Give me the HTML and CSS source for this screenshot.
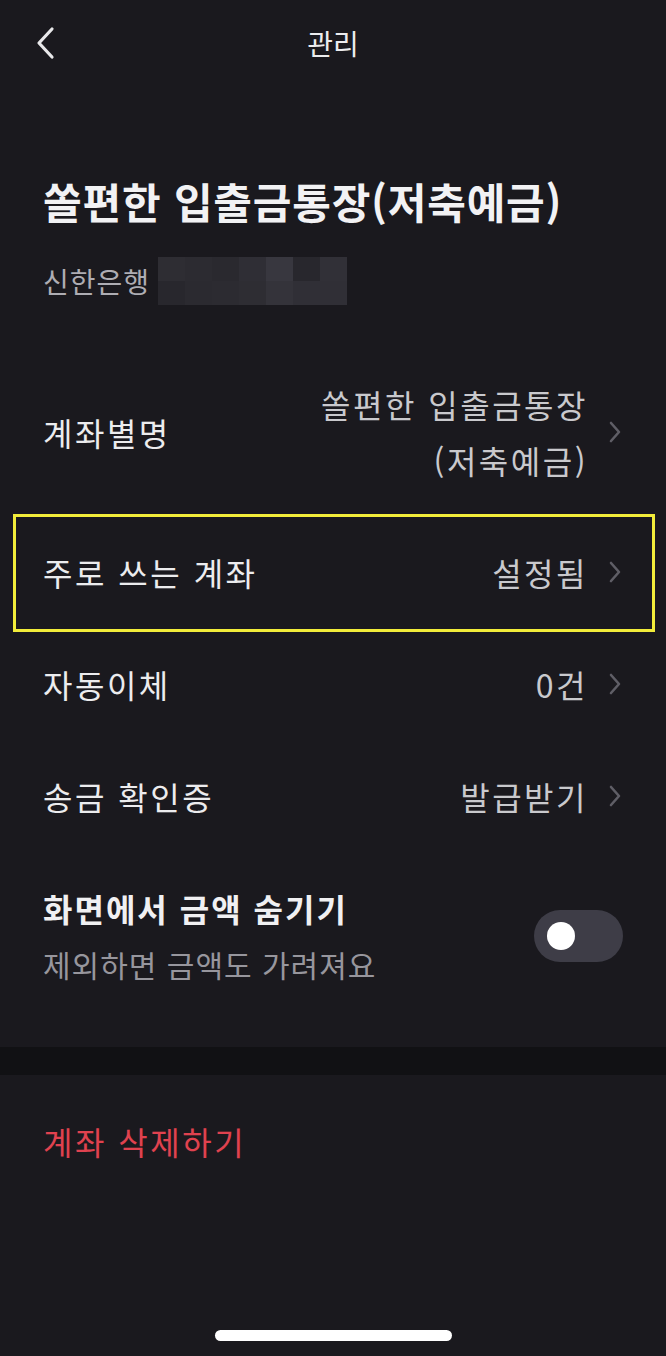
FILE: index.html
```html
<!DOCTYPE html>
<html lang="ko">
<head>
<meta charset="utf-8">
<title>관리</title>
<link rel="stylesheet" href="styles.css">
</head>
<body>
<div class="screen">
  <header class="topbar">
    <span class="back">
      <svg width="22" height="34" viewBox="0 0 22 34"><path d="M18 3 L5 17 L18 31" fill="none" stroke="#e8e8ea" stroke-width="3.2" stroke-linecap="round" stroke-linejoin="round"/></svg>
    </span>
    <h1 class="topbar-title">관리</h1>
  </header>

  <section class="intro">
    <h2 class="account-name">쏠편한 입출금통장(저축예금)</h2>
    <div class="account-sub">
      <span class="bank">신한은행</span>
      <span class="mosaic">
        <i></i><i></i><i></i><i></i><i></i><i></i><i></i>
        <i></i><i></i><i></i><i></i><i></i><i></i><i></i>
      </span>
    </div>
  </section>

  <section class="list">
    <div class="row">
      <span class="label">계좌별명</span>
      <span class="value-wrap">
        <span class="value">쏠편한 입출금통장<br>(저축예금)</span>
        <svg class="chev" width="14" height="22" viewBox="0 0 14 22"><path d="M3 2 L11 11 L3 20" fill="none" stroke="#5f5e66" stroke-width="2.6" stroke-linecap="round" stroke-linejoin="round"/></svg>
      </span>
    </div>
    <div class="row highlighted">
      <span class="label">주로 쓰는 계좌</span>
      <span class="value-wrap">
        <span class="value">설정됨</span>
        <svg class="chev" width="14" height="22" viewBox="0 0 14 22"><path d="M3 2 L11 11 L3 20" fill="none" stroke="#5f5e66" stroke-width="2.6" stroke-linecap="round" stroke-linejoin="round"/></svg>
      </span>
      <span class="highlight-box"></span>
    </div>
    <div class="row">
      <span class="label">자동이체</span>
      <span class="value-wrap">
        <span class="value">0건</span>
        <svg class="chev" width="14" height="22" viewBox="0 0 14 22"><path d="M3 2 L11 11 L3 20" fill="none" stroke="#5f5e66" stroke-width="2.6" stroke-linecap="round" stroke-linejoin="round"/></svg>
      </span>
    </div>
    <div class="row">
      <span class="label">송금 확인증</span>
      <span class="value-wrap">
        <span class="value">발급받기</span>
        <svg class="chev" width="14" height="22" viewBox="0 0 14 22"><path d="M3 2 L11 11 L3 20" fill="none" stroke="#5f5e66" stroke-width="2.6" stroke-linecap="round" stroke-linejoin="round"/></svg>
      </span>
    </div>
    <div class="row">
      <span class="label-stack">
        <span class="label bold">화면에서 금액 숨기기</span>
        <span class="desc">제외하면 금액도 가려져요</span>
      </span>
      <span class="toggle"><span class="knob"></span></span>
    </div>
  </section>

  <div class="band"></div>

  <section class="danger">
    <span class="delete">계좌 삭제하기</span>
  </section>

  <div class="home-indicator"></div>
</div>
</body>
</html>
```

FILE: styles.css
```css
* { box-sizing: border-box; margin: 0; padding: 0; }

html, body {
  background: #1a191e;
}

body {
  width: 666px;
  height: 1356px;
  overflow: hidden;
  font-family: "Noto Sans CJK KR", "Noto Sans", sans-serif;
  color: #ececee;
}

.screen {
  height: 1356px;
  display: flex;
  flex-direction: column;
  position: relative;
}

.topbar {
  height: 86px;
  display: flex;
  align-items: center;
  justify-content: center;
  position: relative;
}

.back {
  position: absolute;
  left: 34px;
  top: 26px;
  display: flex;
}

.topbar-title {
  font-size: 28px;
  font-weight: 400;
  color: #ececee;
  line-height: 40px;
}

.intro {
  padding: 89px 44px 0 43px;
}

.account-name {
  font-size: 42px;
  font-weight: 700;
  line-height: 52px;
  color: #f2f2f4;
  letter-spacing: 0.8px;
  white-space: nowrap;
}

.account-sub {
  margin-top: 30px;
  display: flex;
  align-items: center;
  height: 48px;
}

.bank {
  font-size: 28px;
  line-height: 48px;
  color: #aeadb3;
  letter-spacing: 1px;
}

.mosaic {
  margin-left: 8px;
  width: 189px;
  height: 48px;
  display: grid;
  grid-template-columns: repeat(7, 1fr);
  grid-template-rows: repeat(2, 1fr);
}

.mosaic i { display: block; }
.mosaic i:nth-child(1) { background: #2e2d33; }
.mosaic i:nth-child(2) { background: #2c2b31; }
.mosaic i:nth-child(3) { background: #2a292f; }
.mosaic i:nth-child(4) { background: #2f2e35; }
.mosaic i:nth-child(5) { background: #38373f; }
.mosaic i:nth-child(6) { background: #28272d; }
.mosaic i:nth-child(7) { background: #313037; }
.mosaic i:nth-child(8) { background: #28272d; }
.mosaic i:nth-child(9) { background: #2b2a30; }
.mosaic i:nth-child(10) { background: #2c2b31; }
.mosaic i:nth-child(11) { background: #2e2d33; }
.mosaic i:nth-child(12) { background: #34333a; }
.mosaic i:nth-child(13) { background: #302f36; }
.mosaic i:nth-child(14) { background: #302f36; }

.list {
  margin-top: 43px;
  padding-bottom: 27px;
}

.row {
  position: relative;
  display: flex;
  align-items: center;
  justify-content: space-between;
  padding: 28px 44px 28px 43px;
}

.label {
  font-size: 32px;
  line-height: 56px;
  color: #ececee;
  letter-spacing: 2.5px;
}

.label.bold {
  font-weight: 700;
  color: #f0f0f2;
  letter-spacing: 2px;
}

.label-stack {
  display: flex;
  flex-direction: column;
}

.desc {
  font-size: 30px;
  line-height: 56px;
  color: #97969d;
  letter-spacing: 1px;
}

.value-wrap {
  display: flex;
  align-items: center;
  gap: 20px;
}

.value {
  font-size: 32px;
  line-height: 56px;
  color: #c9c9cd;
  text-align: right;
  letter-spacing: 2.5px;
}

.chev {
  display: block;
}

.highlight-box {
  position: absolute;
  left: 13px;
  right: 11px;
  top: -2px;
  bottom: -4px;
  border: 3px solid #f2ec3a;
  pointer-events: none;
}

.toggle {
  width: 89px;
  height: 52px;
  border-radius: 26px;
  background: #3e3d47;
  display: flex;
  align-items: center;
  padding-left: 13px;
  margin-right: -1px;
}

.knob {
  width: 28px;
  height: 28px;
  border-radius: 50%;
  background: #ffffff;
}

.band {
  height: 28px;
  background: #111114;
}

.danger {
  padding: 38px 43px 0;
}

.delete {
  font-size: 32px;
  line-height: 56px;
  color: #e0424f;
  letter-spacing: 2.5px;
}

.home-indicator {
  position: absolute;
  left: 215px;
  top: 1330px;
  width: 237px;
  height: 11px;
  border-radius: 6px;
  background: #ffffff;
}
```
